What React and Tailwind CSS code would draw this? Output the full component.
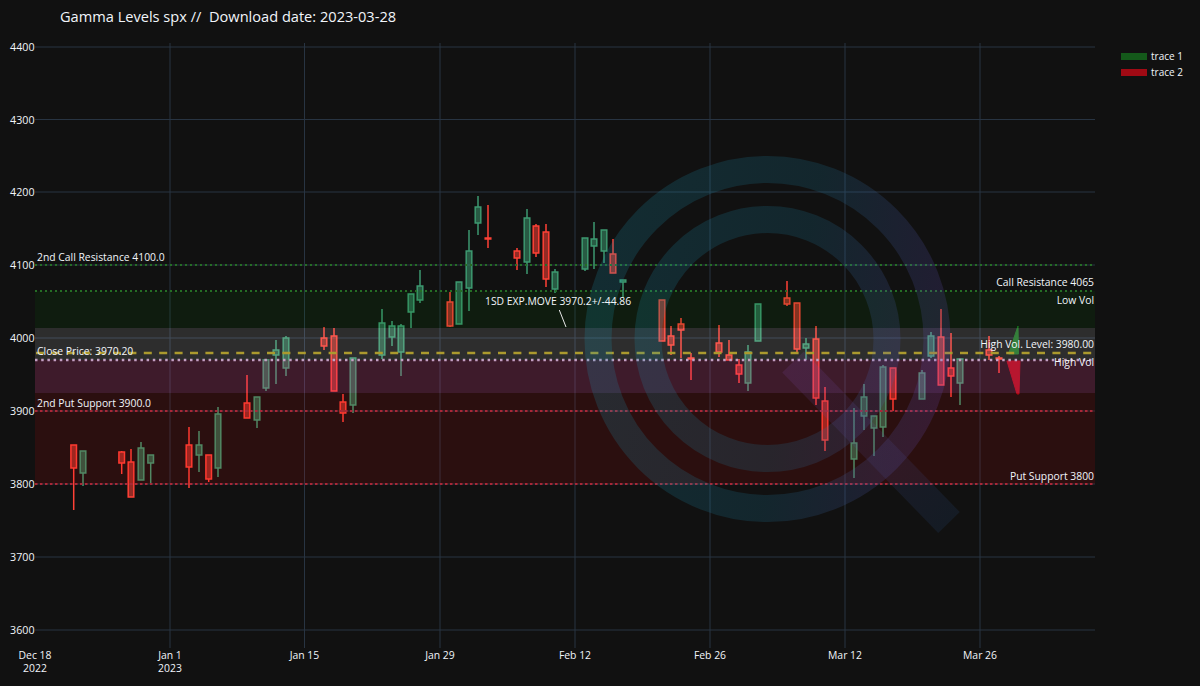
import React from "react";

const FONT = { fontFamily: '"Open Sans", sans-serif' };

// pixel positions read off the chart: x, wick top, body top, body bottom, wick bottom, up/down
const candles = [
  [73.7, 445, 445, 468, 510, "d"], [83, 451, 451, 473, 486, "u"],
  [121.7, 451, 452, 463, 474, "d"], [131, 449, 462, 497, 497, "d"],
  [141, 442, 448, 480, 480, "u"], [150.7, 455, 455, 463, 484, "u"],
  [189, 427, 445, 467, 488, "d"], [199, 431, 445, 455, 472, "u"],
  [208.7, 455, 455, 479, 482, "d"], [218, 407, 414, 468, 477, "u"],
  [247, 375, 403, 418, 418, "d"], [257, 397, 397, 420, 428, "u"],
  [266, 360, 360, 388, 391, "u"], [276, 340, 350, 355, 384, "u"],
  [286, 336, 338, 368, 376, "u"], [324, 327, 338, 346, 350, "d"],
  [334, 328, 336, 391, 391, "d"], [343, 394, 402, 413, 422, "d"],
  [353, 358, 358, 405, 413, "u"], [382, 309, 323, 355, 359, "u"],
  [392, 321, 326, 337, 346, "u"], [401, 324, 326, 352, 376, "u"],
  [411, 294, 294, 312, 328, "u"], [420, 270, 286, 300, 303, "u"],
  [450, 292, 302, 326, 327, "d"], [459, 282, 282, 324, 324, "u"],
  [469, 230, 251, 288, 311, "u"], [478, 196, 207, 223, 235, "u"],
  [488, 205, 238, 239, 248, "d"], [517, 248, 251, 258, 270, "d"],
  [527, 209, 218, 262, 274, "u"], [536, 224, 226, 253, 257, "d"],
  [546, 224, 232, 279, 287, "d"], [555, 269, 272, 289, 293, "u"],
  [585, 238, 238, 269, 271, "u"], [594, 222, 239, 246, 269, "u"],
  [604, 230, 230, 251, 263, "u"], [613, 239, 254, 273, 273, "d"],
  [623, 280, 280, 282, 298, "u"], [662, 300, 300, 341, 341, "d"],
  [671, 326, 336, 345, 355, "d"], [681, 318, 324, 330, 358, "d"],
  [691, 353, 358, 359, 380, "d"], [719, 325, 343, 352, 357, "d"],
  [729, 340, 355, 360, 360, "d"], [739, 359, 365, 374, 383, "d"],
  [748, 345, 352, 383, 391, "u"], [758, 304, 304, 341, 341, "u"],
  [787, 281, 298, 304, 306, "d"], [797, 303, 303, 349, 353, "d"],
  [806, 338, 344, 348, 360, "u"], [816, 326, 339, 398, 405, "d"],
  [825, 387, 401, 440, 451, "d"], [854, 408, 443, 459, 478, "u"],
  [864, 384, 397, 416, 430, "u"], [874, 416, 416, 428, 456, "u"],
  [883, 365, 367, 427, 437, "u"], [893, 368, 368, 399, 411, "d"],
  [922, 370, 373, 399, 399, "u"], [931, 332, 336, 356, 358, "u"],
  [941, 309, 337, 385, 385, "d"], [951, 333, 368, 376, 397, "d"],
  [960, 359, 359, 383, 405, "u"], [989, 336, 350, 355, 360, "d"],
  [999, 356, 358, 359, 373, "d"],
];

const priceTicks = [
  [4400, 47], [4300, 119.5], [4200, 192], [4100, 265], [4000, 338],
  [3900, 411], [3800, 484], [3700, 557], [3600, 630],
];

const dateTicks = [
  [35, "Dec 18", "2022"], [170, "Jan 1", "2023"], [304.5, "Jan 15"],
  [440, "Jan 29"], [575, "Feb 12"], [710, "Feb 26"], [845, "Mar 12"], [980, "Mar 26"],
];

const notes = [
  [37, 261, "start", "2nd Call Resistance 4100.0"],
  [37, 355, "start", "Close Price: 3970.20"],
  [37, 407, "start", "2nd Put Support 3900.0"],
  [1094, 286, "end", "Call Resistance 4065"],
  [1094, 304, "end", "Low Vol"],
  [1094, 348, "end", "High Vol. Level: 3980.00"],
  [1094, 366, "end", "High Vol"],
  [1094, 480, "end", "Put Support 3800"],
  [485, 305, "start", "1SD EXP.MOVE 3970.2+/-44.86"],
];

const Candle = ({ c }) => {
  const [x, wickTop, top, bottom, wickBottom, dir] = c;
  const color = dir === "u" ? "#3d9970" : "#ff4136";
  return (
    <g stroke={color} strokeWidth="1.5">
      <line x1={x} x2={x} y1={wickTop} y2={top} />
      <line x1={x} x2={x} y1={bottom} y2={wickBottom} />
      <rect x={x - 2.8} y={top} width="5.6" height={Math.max(bottom - top, 1)} fill={color} fillOpacity="0.55" />
    </g>
  );
};

const Chart = () => (
  <svg width="1110" height="654" viewBox="0 32 1110 654" className="block shrink-0">
    <defs>
      <linearGradient id="ring" gradientUnits="userSpaceOnUse" x1="600" y1="300" x2="950" y2="360">
        <stop offset="0" stopColor="#1a98b4" />
        <stop offset="0.55" stopColor="#1c7c9e" />
        <stop offset="1" stopColor="#6a48b8" />
      </linearGradient>
      <linearGradient id="tail" gradientUnits="userSpaceOnUse" x1="790" y1="360" x2="950" y2="525">
        <stop offset="0" stopColor="#8a4fc0" />
        <stop offset="1" stopColor="#2a5a9a" />
      </linearGradient>
    </defs>

    {/* grid */}
    <g stroke="#283442" strokeWidth="1">
      {priceTicks.map(([p, y]) => (
        <line key={p} x1="35" x2="1095" y1={y} y2={y} />
      ))}
      {dateTicks.slice(1).map(([x]) => (
        <line key={x} x1={x} x2={x} y1="43" y2="648" />
      ))}
    </g>

    {candles.map((c) => (
      <Candle key={c[0]} c={c} />
    ))}

    {/* the two last traces */}
    <polygon points="1018,326 1008.5,354 1018.5,354" fill="#1a6e20" stroke="#1a6e20" strokeLinejoin="round" />
    <polygon points="1007,361 1020,361 1019,394 1017,394" fill="#a80a16" stroke="#a80a16" strokeLinejoin="round" />

    {/* vol zones */}
    <rect x="35" y="291" width="1060" height="37" fill="#008000" fillOpacity="0.1" />
    <rect x="35" y="328" width="1060" height="32" fill="#ffffff" fillOpacity="0.12" />
    <rect x="35" y="360" width="1060" height="33" fill="#f54896" fillOpacity="0.2" />
    <rect x="35" y="393" width="1060" height="91" fill="#ff0000" fillOpacity="0.11" />

    {/* level lines */}
    <g fill="none">
      <line x1="35" x2="1095" y1="265" y2="265" stroke="#256e25" strokeWidth="2" strokeDasharray="2 3" />
      <line x1="35" x2="1095" y1="291" y2="291" stroke="#256e25" strokeWidth="2" strokeDasharray="2 3" />
      <line x1="35" x2="1095" y1="411" y2="411" stroke="#a82838" strokeWidth="1.8" strokeDasharray="2.5 2.5" />
      <line x1="35" x2="1095" y1="484" y2="484" stroke="#a82838" strokeWidth="1.8" strokeDasharray="2.5 2.5" />
      <line x1="36" x2="1095" y1="353" y2="353" stroke="#ab9a2e" strokeWidth="2.5" strokeDasharray="8 7.4" />
      <line x1="35" x2="1095" y1="360" y2="360" stroke="#c4a0c4" strokeWidth="2.5" strokeDasharray="2.5 3.7" />
    </g>

    {/* watermark logo */}
    <g fill="none">
      <circle cx="767.5" cy="339" r="169.5" stroke="url(#ring)" strokeOpacity="0.2" strokeWidth="27" />
      <circle cx="767.5" cy="339" r="119.5" stroke="url(#ring)" strokeOpacity="0.2" strokeWidth="27" />
      <line x1="793" y1="362" x2="949" y2="522.5" stroke="url(#tail)" strokeOpacity="0.14" strokeWidth="30" />
    </g>

    <line x1="559.3" y1="310" x2="566" y2="327" stroke="#e8e8e8" strokeWidth="1" />

    {/* axis + annotation text */}
    <g style={FONT} fill="#f2f5fa" fontSize="10.4">
      {priceTicks.map(([p, y]) => (
        <text key={p} x="34.5" y={y + 4} textAnchor="end" fontSize="10.7">
          {p}
        </text>
      ))}
      {dateTicks.map(([x, a, b]) => (
        <React.Fragment key={x}>
          <text x={x} y="659" textAnchor="middle">{a}</text>
          {b && <text x={x} y="672" textAnchor="middle">{b}</text>}
        </React.Fragment>
      ))}
      {notes.map(([x, y, anchor, label]) => (
        <text key={label} x={x} y={y} textAnchor={anchor} fontSize="10.35">
          {label}
        </text>
      ))}
    </g>
  </svg>
);

const LegendItem = ({ color, label }) => (
  <div className="flex items-center gap-[4px] h-[16px]">
    <div className={`w-[26px] h-[7px] ${color}`}></div>
    <span className="text-[10px] text-[#f2f5fa]">{label}</span>
  </div>
);

export default function App() {
  return (
    <div className="w-[1200px] h-[686px] bg-[#111111] overflow-hidden" style={FONT}>
      <div className="h-[32px] pl-[60px] pt-[4px] text-[14.6px] leading-[24px] text-[#f2f5fa] whitespace-pre">
        Gamma Levels spx //  Download date: 2023-03-28
      </div>
      <div className="flex">
        <Chart />
        <div className="flex flex-col pl-[11px] pt-[16px]">
          <LegendItem color="bg-[#14591a]" label="trace 1" />
          <LegendItem color="bg-[#a00a14]" label="trace 2" />
        </div>
      </div>
    </div>
  );
}
